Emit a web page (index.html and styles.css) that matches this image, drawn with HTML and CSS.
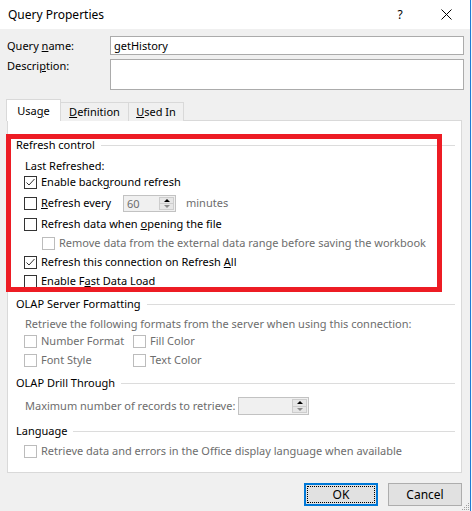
FILE: index.html
```html
<!DOCTYPE html>
<html lang="en">
<head>
<meta charset="utf-8">
<title>Query Properties</title>
<link rel="stylesheet" href="styles.css">
</head>
<body>
<div class="window">
  <div class="titlebar">
    <span class="title">Query Properties</span>
    <span class="cap help">?</span>
    <span class="cap close"><svg width="11" height="11" viewBox="0 0 11 11"><path d="M0.5 0.5 L10.5 10.5 M10.5 0.5 L0.5 10.5" stroke="#000" stroke-width="1" fill="none"/></svg></span>
  </div>
  <div class="content">
    <div class="field">
      <label class="flabel">Query <u>n</u>ame:</label>
      <div class="input">getHistory</div>
    </div>
    <div class="field desc">
      <label class="flabel">Descri<u>p</u>tion:</label>
      <div class="input tall"></div>
    </div>
    <div class="tabs">
      <div class="tab sel">Usa<u>g</u>e</div>
      <div class="tab def"><u>D</u>efinition</div>
      <div class="tab used"><u>U</u>sed In</div>
    </div>
    <div class="panel">
      <div class="row hdr"><span>Refresh control</span></div>
      <div class="row text m5"><span>Last Refreshed:</span></div>
      <div class="row item"><span class="cb on"><svg width="11" height="11" viewBox="0 0 11 11"><path d="M1.5 5.5 L4 8 L9.5 2" stroke="#333" stroke-width="1" fill="none"/></svg></span><span>Enable back<u>g</u>round refresh</span></div>
      <div class="row item m5"><span class="cb"></span><span class="every"><u>R</u>efresh every</span><span class="spin s60"><span class="val">60</span><span class="arrows"><span class="up"></span><span class="dn"></span></span></span><span class="dis minutes">minutes</span></div>
      <div class="row item m5"><span class="cb"></span><span>Refresh data when <u>o</u>pening the file</span></div>
      <div class="row item sub m3 dis"><span class="cb off"></span><span>Remove data from the external data range before saving the workbook</span></div>
      <div class="row item m3"><span class="cb on"><svg width="11" height="11" viewBox="0 0 11 11"><path d="M1.5 5.5 L4 8 L9.5 2" stroke="#333" stroke-width="1" fill="none"/></svg></span><span>Refresh this connection on Refresh <u>A</u>ll</span></div>
      <div class="row item m3"><span class="cb"></span><span>Enable F<u>a</u>st Data Load</span></div>

      <div class="row hdr m7"><span>OLAP Server Formatting</span></div>
      <div class="row text dis m4"><span>Retrieve the following formats from the server when using this connection:</span></div>
      <div class="row item dis m1"><span class="col"><span class="cb off"></span><span>Number Format</span></span><span class="col2"><span class="cb off"></span><span>Fill Color</span></span></div>
      <div class="row item dis m3"><span class="col"><span class="cb off"></span><span>Font Style</span></span><span class="col2"><span class="cb off"></span><span>Text Color</span></span></div>

      <div class="row hdr m7"><span>OLAP Drill Through</span></div>
      <div class="row text dis m7"><span class="maxlbl">Maximum number of records to retrieve:</span><span class="spin smax"><span class="val"></span><span class="arrows"><span class="up"></span><span class="dn"></span></span></span></div>

      <div class="row hdr m9"><span>Language</span></div>
      <div class="row item dis m4"><span class="cb off"></span><span>Retrieve data and errors in the Office display language when available</span></div>
    </div>
    <div class="buttons">
      <button class="btn ok">OK</button>
      <button class="btn">Cancel</button>
    </div>
  </div>
  <div class="annot"></div>
  <svg class="grip" width="9" height="9" viewBox="0 0 9 9">
    <rect x="7" y="1" width="1" height="1" fill="#a0a0a0"/>
    <rect x="5" y="3" width="1" height="1" fill="#a0a0a0"/>
    <rect x="7" y="3" width="1" height="1" fill="#a0a0a0"/>
    <rect x="3" y="5" width="1" height="1" fill="#a0a0a0"/>
    <rect x="5" y="5" width="1" height="1" fill="#a0a0a0"/>
    <rect x="7" y="5" width="1" height="1" fill="#a0a0a0"/>
    <rect x="1" y="7" width="1" height="1" fill="#a0a0a0"/>
    <rect x="3" y="7" width="1" height="1" fill="#a0a0a0"/>
    <rect x="5" y="7" width="1" height="1" fill="#a0a0a0"/>
    <rect x="7" y="7" width="1" height="1" fill="#a0a0a0"/>
  </svg>
</div>
</body>
</html>
```

FILE: styles.css
```css
* { box-sizing: border-box; }
html, body { margin: 0; padding: 0; }
body {
  width: 472px;
  height: 511px;
  overflow: hidden;
  background: #f4f6f9;
  font-family: "Noto Sans", "Segoe UI", sans-serif;
  font-size: 11px;
  color: #000;
}
u { text-decoration: underline; text-underline-offset: 1px; }

.window {
  position: relative;
  width: 471px;
  height: 511px;
  background: #f0f0f0;
  border-right: 1px solid #1f7ad3;
  display: flex;
  flex-direction: column;
}

.titlebar {
  height: 29px;
  flex: none;
  background: #fff;
  display: flex;
  align-items: center;
  padding-left: 8px;
  padding-right: 1px;
}
.title { flex: 1; font-size: 12px; }
.cap {
  width: 46px;
  height: 29px;
  display: flex;
  align-items: center;
  justify-content: center;
  font-size: 12px;
}

.content {
  flex: 1;
  display: flex;
  flex-direction: column;
  padding: 7px 8px 0 7px;
}

.field { display: flex; margin-right: -2px; }
.flabel { width: 103px; line-height: 19px; }
.input {
  flex: 1;
  height: 19px;
  border: 1px solid #ababab;
  background: #fff;
  padding-left: 3px;
  line-height: 17px;
}
.desc { margin-top: 4px; }
.desc .flabel { line-height: 13px; }
.input.tall { height: 31px; }

.tabs {
  display: flex;
  align-items: flex-end;
  height: 22px;
  margin-top: 9px;
  margin-bottom: -1px;
  position: relative;
  z-index: 1;
}
.tab {
  height: 19px;
  border: 1px solid #d9d9d9;
  border-bottom: none;
  background: #f0f0f0;
  text-align: center;
  line-height: 18px;
}
.tab.sel {
  height: 22px;
  width: 55px;
  margin-left: -1px;
  background: #fff;
  line-height: 21px;
}
.tab.def { width: 68px; border-left: none; }
.tab.used { width: 55px; border-left: none; }

.panel {
  height: 353px;
  flex: none;
  background: #fff;
  border: 1px solid #d9d9d9;
  padding: 16px 6px 0 8px;
}

.row {
  height: 16px;
  line-height: 16px;
  display: flex;
  align-items: center;
  white-space: pre;
}
.m1 { margin-top: 1px; }
.m3 { margin-top: 3px; }
.m4 { margin-top: 4px; }
.m5 { margin-top: 5px; }
.m7 { margin-top: 7px; }
.m9 { margin-top: 9px; }

.hdr::after {
  content: "";
  flex: 1;
  height: 1px;
  background: #dcdcdc;
  margin-left: 6px;
}
.text { padding-left: 9px; }
.item { padding-left: 8px; }
.item.sub { padding-left: 26px; }
.dis { color: #6d6d6d; }

.cb {
  width: 13px;
  height: 13px;
  flex: none;
  border: 1px solid #333;
  background: #fff;
  margin-right: 4px;
  display: flex;
  align-items: center;
  justify-content: center;
}
.cb.off { border-color: #bcbcbc; }

.col { display: flex; align-items: center; width: 109px; }
.col2 { display: flex; align-items: center; }

.every { width: 82px; }
.spin {
  display: flex;
  border: 1px solid #c2c2c2;
  background: #f0f0f0;
  color: #6d6d6d;
}
.s60 { width: 53px; height: 17px; }
.smax { width: 71px; height: 18px; }
.val { flex: 1; padding-left: 3px; line-height: 15px; }
.arrows {
  width: 16px;
  display: flex;
  flex-direction: column;
  padding: 1px 1px 1px 0;
}
.up, .dn {
  flex: 1;
  background: #e6e6e6;
  border: 1px solid #cdcdcd;
  display: flex;
  align-items: center;
  justify-content: center;
}
.dn { border-top: none; }
.up::after {
  content: "";
  border-left: 3px solid transparent;
  border-right: 3px solid transparent;
  border-bottom: 3px solid #000;
}
.dn::after {
  content: "";
  border-left: 3px solid transparent;
  border-right: 3px solid transparent;
  border-top: 3px solid #8a8a8a;
}
.minutes { margin-left: 10px; }
.maxlbl { width: 213px; }

.buttons {
  display: flex;
  justify-content: flex-end;
  gap: 10px;
  margin-top: 10px;
}
.btn {
  width: 74px;
  height: 23px;
  padding: 0;
  background: #e1e1e1;
  border: 1px solid #adadad;
  font-family: inherit;
  font-size: 12px;
  color: #000;
}
.btn.ok {
  border: 2px solid #0078d7;
  outline: 1px dotted #000;
  outline-offset: -4px;
}

.annot {
  position: absolute;
  left: 6px;
  top: 134px;
  width: 436px;
  height: 158px;
  border: 5px solid #ed1c24;
  pointer-events: none;
}
.grip {
  position: absolute;
  right: 0;
  bottom: 0;
}
```
